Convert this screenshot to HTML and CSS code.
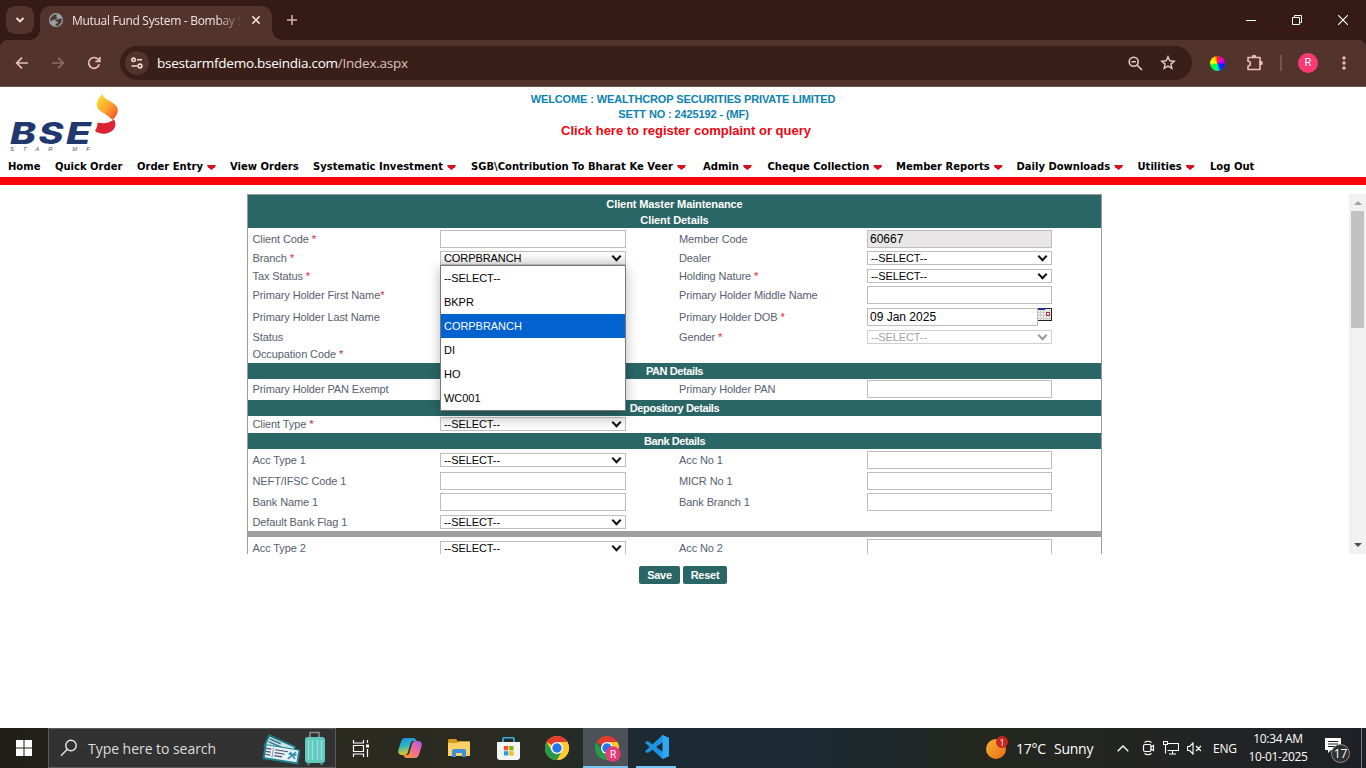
FILE: index.html
```
<!DOCTYPE html>
<html lang="en">
<head>
<meta charset="utf-8">
<title>Mutual Fund System - Bombay Stock Exchange</title>
<link rel="stylesheet" href="styles.css">
</head>
<body>
<div class="screen">
  <header class="tabstrip">
    <button class="tab-search"><svg width="28" height="28" viewBox="0 0 28 28"><path d="M10.5 12l3.5 3.5 3.5-3.5" fill="none" stroke="#f3e3df" stroke-width="1.8"/></svg></button>
    <div class="tab">
      <svg class="globe" width="14" height="14" viewBox="0 0 14 14"><circle cx="7" cy="7" r="7" fill="#94a0a8"/><path d="M4 2.2l3.8-1-.6 2.2 1.2 1.7-2.3 1.6-2.7.2L1.8 9 1.3 5.6zM8.6 6.2l4.3-.7-.6 3.8-2.7 3.2-3.1.5.2-1.9 2.4-1-1-1.6-2-.2 1-1.5z" fill="#52342d"/></svg>
      <span class="tab-title">Mutual Fund System - Bombay <i>S</i></span>
      <svg class="tab-close" width="10" height="10" viewBox="0 0 10 10"><path d="M1.4 1.4l7.2 7.2M8.6 1.4L1.4 8.6" stroke="#f3e3df" stroke-width="1.5"/></svg>
    </div>
    <svg class="newtab" width="12" height="12" viewBox="0 0 12 12"><path d="M6 1v10M1 6h10" stroke="#dcb3ab" stroke-width="1.5"/></svg>
    <div class="window-buttons">
      <svg width="10" height="10"><path d="M0 5.5h10" stroke="#fff"/></svg>
      <svg width="10" height="10" fill="none" stroke="#fff"><path d="M.5 2.5h7v7h-7zM2.500 2V.5h7v7H8"/></svg>
      <svg width="10" height="10"><path d="M0 0l10 10M10 0L0 10" stroke="#fff" stroke-width="1.1"/></svg>
    </div>
  </header>
  <div class="toolbar">
    <svg class="tb-icon back" width="14" height="14" viewBox="0 0 14 14" fill="none" stroke="#e9c0b7" stroke-width="1.7"><path d="M13 7H2M7 1.700L1.700 7 7 12.300"/></svg>
    <svg class="tb-icon fwd" width="14" height="14" viewBox="0 0 14 14" fill="none" stroke="#8d6b63" stroke-width="1.7"><path d="M1 7h11M7 1.700L12.300 7 7 12.300"/></svg>
    <svg class="tb-icon reload" width="14" height="14" viewBox="0 0 14 14" fill="none" stroke="#e9c0b7" stroke-width="1.7"><path d="M12.300 8.300A5.400 5.400 0 1 1 11.300 3.500L12.600 5M12.800 1v4.400H8.400"/></svg>
    <div class="omnibox">
      <span class="site"><svg width="14" height="12" viewBox="0 0 14 12" fill="none" stroke="#eed9d4" stroke-width="1.600"><circle cx="3.500" cy="2.800" r="1.700"/><path d="M7 2.800h5M1.500 9H7"/><circle cx="10" cy="9" r="1.900"/></svg></span>
      <span class="url">bsestarmfdemo.bseindia.com<i>/Index.aspx</i></span>
      <svg class="zoomicon" width="15" height="15" viewBox="0 0 15 15" fill="none" stroke="#e3cbc5" stroke-width="1.600"><circle cx="5.700" cy="5.700" r="4.500"/><path d="M9 9l5 5M3.500 5.700h4.400"/></svg>
      <svg class="star" width="16" height="16" viewBox="0 0 16 16" fill="none" stroke="#e3cbc5" stroke-width="1.400"><path d="M8 1.800l1.800 4 4.400.4-3.300 2.900 1 4.300L8 11.100l-3.900 2.300 1-4.300-3.300-2.900 4.400-.4z"/></svg>
    </div>
    <span class="wheel"></span>
    <svg class="puzzle" width="18" height="18" viewBox="0 0 18 18" fill="none" stroke="#e9c0b7" stroke-width="1.600" stroke-linejoin="round"><path d="M2 3.500h12v12H2v-3.500a2.400 2.400 0 0 0 0-4.800z"/><path d="M6.500 3a1.500 1.500 0 0 1 3 0zM14.500 7.500a1.500 1.500 0 0 1 0 3z" fill="#e9c0b7"/></svg>
    <span class="tb-sep"></span>
    <span class="avatar">R</span>
    <svg class="kebab" width="4" height="14" viewBox="0 0 4 14" fill="#e9c0b7"><circle cx="2" cy="2" r="1.700"/><circle cx="2" cy="7" r="1.700"/><circle cx="2" cy="12" r="1.700"/></svg>
  </div>

  <main class="page">
    <div class="masthead">
      <svg class="logo" width="124" height="68" viewBox="0 0 124 68">
        <defs><linearGradient id="flame" x1="0" y1="0" x2="1" y2="1"><stop offset="0" stop-color="#ffe43a"/><stop offset=".5" stop-color="#fba72c"/><stop offset="1" stop-color="#f4472a"/></linearGradient></defs>
        <text class="logo-name" y="56.500"><tspan x="10" textLength="26" lengthAdjust="spacingAndGlyphs">B</tspan><tspan x="38.500" textLength="25" lengthAdjust="spacingAndGlyphs">S</tspan><tspan x="66" textLength="25" lengthAdjust="spacingAndGlyphs">E</tspan></text>
        <text class="logo-sub" x="10" y="63.500" textLength="80">STAR MF</text>
        <path d="M102.500 7c-4 4-6.500 8-5.500 12.500 1.500 5.500 9 6.500 15.500 13.500 4-3.500 6-8 5-12-2.500-7-14.500-7.500-15-14z" fill="url(#flame)"/>
        <path d="M97.500 35.500c6 1.500 12 .5 16.500-3 2 3 2 7-.5 10-4 5-13 5.500-18.500 1.500 2-3 2.500-6 2.500-8.500z" fill="#dc2430"/>
      </svg>
      <div class="welcome">
        <p class="w1">WELCOME : WEALTHCROP SECURITIES PRIVATE LIMITED</p>
        <p class="w2">SETT NO : 2425192 - (MF)</p>
        <p class="w3">Click here to register complaint or query</p>
      </div>
    </div>
    <nav class="menu">
      <a style="width:47px">Home</a><a style="width:82px">Quick Order</a><a class="drop" style="width:93px">Order Entry</a><a style="width:83px">View Orders</a><a class="drop" style="width:158px">Systematic Investment</a><a class="drop" style="width:232px">SGB\Contribution To Bharat Ke Veer</a><a class="drop" style="width:64.500px">Admin</a><a class="drop" style="width:128.500px">Cheque Collection</a><a class="drop" style="width:120.500px">Member Reports</a><a class="drop" style="width:121px">Daily Downloads</a><a class="drop" style="width:72.500px">Utilities</a><a>Log Out</a>
    </nav>
    <div class="workspace">
      <form class="sheet">
        <div class="band tall"><span>Client Master Maintenance</span><span>Client Details</span></div>
        <div class="row r21 down"><label>Client Code <b>*</b></label><span class="input"></span><label>Member Code</label><span class="input readonly">60667</span></div>
        <div class="row r18 branch"><label>Branch <b>*</b></label><span class="select shaded">CORPBRANCH</span><label>Dealer</label><span class="select">--SELECT--</span>
          <ul class="options"><li>--SELECT--</li><li>BKPR</li><li class="chosen">CORPBRANCH</li><li>DI</li><li>HO</li><li>WC001</li></ul>
        </div>
        <div class="row r18"><label>Tax Status <b>*</b></label><span class="select">--SELECT--</span><label>Holding Nature <b>*</b></label><span class="select">--SELECT--</span></div>
        <div class="row r21 up"><label>Primary Holder First Name<b>*</b></label><span class="input"></span><label>Primary Holder Middle Name</label><span class="input"></span></div>
        <div class="row r22"><label>Primary Holder Last Name</label><span class="input"></span><label>Primary Holder DOB <b>*</b></label><span class="date"><span class="input">09 Jan 2025</span><svg width="14" height="13" viewBox="0 0 14 13"><path fill="#eee" d="M0 0h14v13H0z"/><path d="M2.500 2v10M5.500 2v10M8.500 2v10M11.500 2v10M0 4.500h13M0 7.500h13M0 10.500h13" stroke="#ccc"/><path fill="#1b2fa0" d="M0 0h7v2H0z"/><path fill="#222" d="M7 0h7v1H7zM13 0h1v13h-1zM0 12h14v1H0z"/><path d="M8.500 4.500h3v3h-3z" fill="#fff" stroke="#b02030"/></svg></span></div>
        <div class="row r18"><label>Status</label><span class="select">--SELECT--</span><label>Gender <b>*</b></label><span class="select disabled">--SELECT--</span></div>
        <div class="row r17"><label>Occupation Code <b class="dim">*</b></label></div>
        <div class="band tight">PAN Details</div>
        <div class="row r21 up"><label>Primary Holder PAN Exempt</label><span class="select">--SELECT--</span><label>Primary Holder PAN</label><span class="input"></span></div>
        <div class="band tight">Depository Details</div>
        <div class="row r17 up"><label>Client Type <b class="dim">*</b></label><span class="select under">--SELECT--</span></div>
        <div class="band tight">Bank Details</div>
        <div class="row r21 down"><label>Acc Type 1</label><span class="select">--SELECT--</span><label>Acc No 1</label><span class="input"></span></div>
        <div class="row r21 down"><label>NEFT/IFSC Code 1</label><span class="input"></span><label>MICR No 1</label><span class="input"></span></div>
        <div class="row r21 down"><label>Bank Name 1</label><span class="input"></span><label>Bank Branch 1</label><span class="input"></span></div>
        <div class="row r19 down"><label>Default Bank Flag 1</label><span class="select">--SELECT--</span></div>
        <div class="divider"></div>
        <div class="row r22"><label>Acc Type 2</label><span class="select">--SELECT--</span><label>Acc No 2</label><span class="input"></span></div>
      </form>
      <div class="scrollbar"><svg width="8" height="4"><path d="M0 4l4-4 4 4z" fill="#a3a3a3"/></svg><span class="thumb"></span><svg class="dn" width="8" height="4"><path d="M0 0l4 4 4-4z" fill="#505050"/></svg></div>
    </div>
    <div class="actions"><button class="save">Save</button><button class="reset">Reset</button></div>
  </main>

  <footer class="taskbar">
    <span class="start"><svg width="16" height="16" viewBox="0 0 16 16" fill="#fff"><path d="M0 0h7.500v7.500H0zM8.500 0H16v7.500H8.500zM0 8.500h7.500V16H0zM8.500 8.500H16V16H8.500z"/></svg></span>
    <div class="search">
      <svg width="18" height="18" viewBox="0 0 18 18" fill="none" stroke="#e8e8e8" stroke-width="1.400"><circle cx="11" cy="6.500" r="5.200"/><path d="M7.300 10.300L1 16.700"/></svg>
      <span>Type here to search</span>
      <svg class="travel" width="66" height="36" viewBox="0 0 66 36">
        <g transform="rotate(24 5 5)"><path d="M7 3h30v14H7z" fill="#18777f"/><path d="M9 5h27v10H9z" fill="#c9e4ea"/><path d="M10 7h12M10 10h16" stroke="#397486" stroke-width="1.500"/></g>
        <g transform="rotate(9 3 20)"><path d="M3 14h36v15H3z" fill="#1b8390"/><path d="M5 15h32v12H5z" fill="#e6f1f5"/><path d="M5 18h5M5 21h5M5 24h5M14 18h13M14 21h10M14 24h8" stroke="#4c5273" stroke-width="1.200"/><path d="M29 18l6 6M35 17l-7 8M28 20h8" stroke="#3590ae" stroke-width="1.700"/><path d="M12 16v10" stroke="#999"/></g>
        <path d="M49 8V2.500h9V8" fill="none" stroke="#8b8d91" stroke-width="1.600"/><rect x="44" y="7" width="20" height="26" rx="3" fill="#62c8bd"/><path d="M47.500 10v20M51.500 10v20M56.500 10v20M60.500 10v20" stroke="#8be3d8" stroke-width="1.500"/><path d="M46 34h3M59 34h3" stroke="#397c78" stroke-width="2"/>
      </svg>
    </div>
    <div class="apps">
      <span><svg width="18" height="17" viewBox="0 0 18 17" fill="none" stroke="#fff" stroke-width="1.200"><path d="M1.500 0v3h10V0M1.500 17v-3h10v3M1.500 5.500h10v6h-10zM15.500 0v3M15.500 9v8"/><path d="M14 4.500h3v3h-3z" fill="#fff" stroke="none"/></svg></span>
      <span><svg width="24" height="22" viewBox="0 0 24 22">
        <defs><linearGradient id="cpa" x1="0" y1="0" x2=".2" y2="1"><stop offset="0" stop-color="#2487e8"/><stop offset=".5" stop-color="#28b9bd"/><stop offset="1" stop-color="#e8c330"/></linearGradient><linearGradient id="cpb" x1="1" y1="0" x2=".3" y2="1"><stop offset="0" stop-color="#a05be8"/><stop offset=".5" stop-color="#ed6a9b"/><stop offset="1" stop-color="#f88d42"/></linearGradient></defs>
        <path d="M7 1h8c2 0 3 1 3.500 3H15c-1.500 0-2 1-2.500 2.500L10 15c-.6 2-1.600 3-3.500 3H4c-3 0-4.500-2-3.500-5.500L3 4.500C3.700 2 5 1 7 1z" fill="url(#cpa)"/>
        <path d="M17 21H9c-2 0-3-1-3.500-3H9c1.500 0 2-1 2.500-2.500L14 7c.6-2 1.600-3 3.500-3H20c3 0 4.500 2 3.500 5.500L21 17.500C20.300 20 19 21 17 21z" fill="url(#cpb)"/></svg></span>
      <span><svg width="22" height="18" viewBox="0 0 22 18"><path d="M0 1.500Q0 0 1.500 0H8l2 2.500h11V5H0z" fill="#db9a16"/><path d="M0 4h9l2-1.500h11V17H0z" fill="#fbd168"/><path d="M4 18v-6q0-2 2-2h10q2 0 2 2v6h-4v-4H8v4z" fill="#3b91d5"/></svg></span>
      <span><svg width="23" height="23" viewBox="0 0 23 23"><path d="M6 6V2q0-1.300 1.300-1.300h8.400Q17 .7 17 2v4" fill="none" stroke="#31b1e8" stroke-width="1.700"/><path d="M0 5h23v15q0 3-3 3H3q-3 0-3-3z" fill="#f4f4f4"/><path d="M7 9h4.300v4.300H7z" fill="#f05022"/><path d="M12.200 9h4.300v4.300h-4.300z" fill="#7db700"/><path d="M7 14.200h4.300v4.300H7z" fill="#1aa1e8"/><path d="M12.200 14.200h4.300v4.300h-4.300z" fill="#fdb80a"/></svg></span>
      <span><svg width="24" height="24" viewBox="0 0 24 24"><circle cx="12" cy="12" r="12" fill="#fcc934"/><path d="M12 12L1.600 6A12 12 0 0 1 22.400 6H12z" fill="#e33b2e"/><path d="M1.600 6A12 12 0 0 0 12 24l5.200-9H6.800z" fill="#249a4a"/><path d="M12 6h10.400A12 12 0 0 1 12 24l5.200-9z" fill="#fcc934"/><circle cx="12" cy="12" r="6" fill="#fff"/><circle cx="12" cy="12" r="4.700" fill="#2776e8"/></svg></span>
      <span class="active"><svg width="27" height="26" viewBox="0 0 27 26"><path d="M12 12L1.600 6A12 12 0 0 1 22.400 6H12z" fill="#e33b2e"/><path d="M1.600 6A12 12 0 0 0 12 24l5.200-9H6.800z" fill="#249a4a"/><path d="M12 6h10.400A12 12 0 0 1 12 24l5.200-9z" fill="#fcc934"/><circle cx="12" cy="12" r="6" fill="#fff"/><circle cx="12" cy="12" r="4.700" fill="#2776e8"/><circle cx="18" cy="18" r="7.700" fill="#e83b76"/><text class="badge-letter" x="18" y="21.500">R</text></svg></span>
      <span class="running"><svg width="24" height="24" viewBox="0 0 24 24"><path d="M17.500 0L24 3v18l-6.500 3L2 9.500 0 8l1.500-1.700 2 .2L18 17V7L3.500 17.500l-2 .2L0 16l2-1.500z" fill="#1c94e0"/><path d="M17.500 0L24 3v18l-6.500 3z" fill="#32a8f0"/></svg></span>
    </div>
    <div class="weather"><svg width="23" height="24" viewBox="0 0 23 24"><defs><linearGradient id="sun" x1="0" y1="0" x2="1" y2="1"><stop offset="0" stop-color="#f6b234"/><stop offset="1" stop-color="#ec6c10"/></linearGradient></defs><circle cx="10" cy="13" r="10" fill="url(#sun)"/><circle cx="16" cy="6" r="6" fill="#c9261d"/><text class="alert" x="16" y="9.500">1</text></svg><span class="temp">17°C</span><span class="sky">Sunny</span></div>
    <div class="tray">
      <svg class="t1" width="12" height="7" viewBox="0 0 12 7"><path d="M.7 6.300L6 1l5.300 5.300" fill="none" stroke="#fff" stroke-width="1.300"/></svg>
      <svg class="t2" width="13" height="16" viewBox="0 0 13 16" fill="none" stroke="#fff" stroke-width="1.200"><path d="M2.500 2.500Q6 0 9.500 2.500M2.500 13.500Q6 16 9.500 13.500M8.500 7l3-1.500v5L8.500 9"/><rect x="1.500" y="4.500" width="7.500" height="7" rx="1.500"/></svg>
      <svg class="t3" width="16" height="14" viewBox="0 0 16 14" fill="none" stroke="#fff" stroke-width="1.100"><path d="M4.500 2.500h11v7H4.500M.5.500h4v3h-4zM2.500 3.500v9M9.500 9.500v3M6 13h7"/></svg>
      <svg class="t4" width="15" height="13" viewBox="0 0 15 13" fill="none" stroke="#fff" stroke-width="1.100"><path d="M.6 4.500h2L6 1v11L2.600 8.500h-2zM9 4l5 5M14 4L9 9"/></svg>
      <span class="lang">ENG</span>
      <span class="clock"><span>10:34 AM</span><span class="day">10-01-2025</span></span>
      <svg class="note" width="26" height="26" viewBox="0 0 26 26"><path d="M0 0h16v12H6l-3 3v-3H0z" fill="#fff"/><path d="M3 3.500h10M3 6h10M3 8.500h10" stroke="#252525"/><circle cx="15.500" cy="15.500" r="9" fill="#303030" stroke="#8e8e8e"/><text class="count" x="15.500" y="19.700">17</text></svg>
    </div>
  </footer>
</div>
</body>
</html>
```
FILE: styles.css
```
*, *::before, *::after { box-sizing: border-box; }
body { margin: 0; background: #fff; font-family: "Liberation Sans", Arial, sans-serif; }
svg { display: block; flex: none; }
p, ul { margin: 0; padding: 0; list-style: none; }
button { border: 0; padding: 0; }
i { font-style: normal; }
.screen { width: 1366px; height: 768px; display: flex; flex-direction: column; overflow: hidden; }

/* Browser frame */
.tabstrip { height: 40px; flex: none; display: flex; align-items: center; background: #351a15; padding-left: 6px; font-family: "Open Sans", "Noto Sans", sans-serif; }
.tab-search { width: 28px; height: 28px; border-radius: 9px; background: #52342d; }
.tab { position: relative; width: 232px; height: 34px; margin: 6px 0 0 6px; padding: 0 11px 6px 9px; display: flex; align-items: center; background: #52342d; border-radius: 10px 10px 0 0; }
.tab::before, .tab::after { content: ""; position: absolute; bottom: 0; width: 10px; height: 10px; }
.tab::before { left: -10px; background: radial-gradient(circle at 0 0, transparent 9.500px, #52342d 10px); }
.tab::after { right: -10px; background: radial-gradient(circle at 100% 0, transparent 9.500px, #52342d 10px); }
.tab-title { margin-left: 9px; width: 174px; white-space: nowrap; font-size: 12px; letter-spacing: -.3px; color: #f3e3df; -webkit-mask-image: linear-gradient(90deg, #000 145px, transparent 170px); mask-image: linear-gradient(90deg, #000 145px, transparent 170px); }
.tab-close { margin-left: auto; }
.newtab { margin-left: 14px; }
.window-buttons { margin-left: auto; display: flex; gap: 36px; padding-right: 18px; }
.toolbar { height: 47px; flex: none; display: flex; align-items: center; background: radial-gradient(circle at 8px 8px, #52342d 8px, #351a15 8.500px) 0 0 / 8px 8px no-repeat, radial-gradient(circle at 0 8px, #52342d 8px, #351a15 8.500px) 100% 0 / 8px 8px no-repeat, #52342d; border-bottom: 1px solid #705850; padding-left: 15px; }
.fwd { margin-left: 22px; }
.reload { margin-left: 22px; }
.omnibox { width: 1072px; height: 34px; margin-left: 19px; border-radius: 17px; background: #3a1f18; display: flex; align-items: center; padding-left: 5px; }
.site { width: 24px; height: 24px; border-radius: 12px; background: #52342d; display: flex; align-items: center; justify-content: center; }
.url { margin-left: 8px; font: 13.500px "Open Sans", "Noto Sans", sans-serif; letter-spacing: -.25px; color: #fff; white-space: nowrap; }
.url i { color: #d9c4bf; }
.zoomicon { margin-left: auto; }
.star { margin: 0 16px 0 17px; }
.wheel { width: 15px; height: 15px; border-radius: 50%; margin-left: 18px; background: conic-gradient(#ff2020, #f0c 40deg, #a0f 85deg, #02f 100deg, #03f 150deg, #0cc 170deg, #0f6 200deg, #0f3 250deg, #ff0 280deg, #fd0 330deg, #f22); }
.puzzle { margin-left: 21px; }
.tb-sep { width: 2px; height: 16px; background: #75544b; margin-left: 16px; }
.avatar { width: 20px; height: 20px; border-radius: 50%; margin-left: 16px; background: #f83a72; color: #fff; font: 11px/20px Roboto, sans-serif; text-align: center; }
.kebab { margin-left: 24px; }

/* Page head */
.page { flex: 1; display: flex; flex-direction: column; min-height: 0; }
.masthead { height: 70px; display: flex; }
.logo-name { font: italic 800 30px Inter, "Liberation Sans", sans-serif; fill: #21386f; }
.logo-sub { font: italic 6px "Liberation Sans", sans-serif; fill: #555; }
.welcome { width: 1118px; text-align: center; font-weight: bold; font-size: 11px; letter-spacing: -.12px; color: #0c82ae; padding-top: 5px; white-space: nowrap; }
.welcome p { line-height: 15px; }
.w2 { padding-left: 1px; }
.welcome .w3 { font-size: 13px; letter-spacing: 0; color: #f00510; line-height: 17px; padding-left: 6px; }
.menu { height: 28px; flex: none; display: flex; padding: 3px 0 0 8px; border-bottom: 8px solid #ff0008; font: bold 10px/13px "DejaVu Sans", Verdana, sans-serif; color: #000; white-space: nowrap; }
.menu a { flex: none; }
.drop::after { content: ""; display: inline-block; width: 9px; height: 5px; margin-left: 4px; vertical-align: 0; background: #d6101c; clip-path: polygon(0 0, 100% 0, 88% 45%, 50% 100%, 12% 45%); }

/* Form */
.workspace { height: 360px; margin-top: 9px; flex: none; display: flex; justify-content: space-between; padding-left: 247px; }
.sheet { width: 855px; height: 360px; overflow: hidden; border: 1px solid #9c9c9c; border-bottom: 0; font-size: 11px; color: #56606f; }
.band { height: 16px; line-height: 16px; background: #2b6666; color: #fff; font-weight: bold; text-align: center; letter-spacing: -.1px; }
.band.tight { letter-spacing: -.4px; }
.band.tall { height: 33px; padding-top: 1px; }
.band span { display: block; }
.row { display: grid; grid-template-columns: 187.500px 186px 53px 188px 185px; align-items: center; padding-left: 4.500px; white-space: nowrap; line-height: 13px; }
.row label { letter-spacing: -.1px; }
.row label:first-child { grid-column: 1; }
.row label:nth-of-type(2) { grid-column: 4; }
.r17 { height: 17px; } .r18 { height: 18px; } .r19 { height: 19px; } .r21 { height: 21px; } .r22 { height: 22px; }
.up { padding-bottom: 1px; }
.down { padding-top: 1px; }
.row b { color: #f01830; font-weight: normal; }
.row b.dim { color: #a03038; }
.input { display: block; height: 18px; border: 1px solid #bdbdbd; background: #fff; color: #000; font-size: 12px; line-height: 16px; padding-left: 2px; }
.readonly { background: #e8e6e7; }
.select { height: 14px; border: 1px solid #bdbdbd; color: #000; line-height: 12px; padding: 0 5px 0 3px; display: flex; justify-content: space-between; align-items: center; font-size: 11px; letter-spacing: -.08px; }
.select::after { content: ""; width: 7px; height: 7px; border: solid #111; border-width: 0 2px 2px 0; transform: translateY(-2px) rotate(45deg); }
.shaded { background: linear-gradient(#fff, #e8e8e8); }
.under { background: linear-gradient(#ececec, #fff); }
.disabled { color: #a2a2a2; border-color: #d0d0d0; }
.disabled::after { border-color: #999; }
.date { display: flex; }
.date .input { width: 172px; }
.divider { height: 6px; background: #9f9f9f; }
.branch { position: relative; }
.options { position: absolute; z-index: 2; left: 192px; top: 16px; width: 186px; height: 146px; background: #fff; border: 1px solid #777; color: #000; font-size: 11px; letter-spacing: -.04px; box-shadow: 0 3px 12px rgba(0, 0, 0, .28); }
.options li { height: 24px; line-height: 24px; padding-left: 3px; }
.options .chosen { background: #0262cf; color: #fff; }
.scrollbar { width: 17px; background: #f1f1f1; display: flex; flex-direction: column; align-items: center; padding: 7px 0; }
.thumb { width: 13px; height: 117px; margin-top: 6px; background: #c1c1c1; }
.dn { margin-top: auto; }
.actions { display: flex; gap: 3px; margin: 12px 0 0 639px; }
.actions button { height: 18px; border-radius: 2px; background: #2b6666; color: #fff; font: bold 11px "Liberation Sans", sans-serif; letter-spacing: -.25px; }
.save { width: 41px; }
.reset { width: 44px; }

/* Desktop bar */
.taskbar { height: 40px; flex: none; display: flex; align-items: stretch; color: #fff; font-family: "Open Sans", "Noto Sans", sans-serif; background: linear-gradient(90deg, #211f18, #2b2a20 350px, #2a2b23 540px, #1c2a33 650px, #1b2a35 800px, #24271f 980px, #232424 1180px, #1d2125); }
.start { width: 48px; display: flex; align-items: center; justify-content: center; }
.search { width: 288px; border: 1px solid #5b5b5b; background: #323232; display: flex; align-items: center; padding-left: 11px; font-size: 14px; letter-spacing: -.04px; color: #ddd; white-space: nowrap; }
.search span { margin-left: 10px; }
.travel { margin-left: auto; margin-right: 8px; }
.apps { display: flex; }
.apps span { width: 49px; display: flex; align-items: center; justify-content: center; padding-left: 1px; }
.apps .active { width: 45px; margin-left: 2px; background: #4d5257; border-bottom: 2px solid #76c5f2; padding: 3px 0 0 5px; }
.apps .running { width: 40px; margin-left: 8px; border-bottom: 2px solid #76c5f2; }
.badge-letter { font: 10px Roboto, sans-serif; fill: #fff; text-anchor: middle; }
.weather { display: flex; align-items: center; width: 110px; margin-left: 310px; font-size: 14px; letter-spacing: -.25px; white-space: nowrap; }
.temp { margin-left: 7px; width: 31px; }
.sky { margin-left: 7px; }
.alert { font: 9px "Open Sans", sans-serif; fill: #fff; text-anchor: middle; }
.tray { display: flex; align-items: center; margin: 0 4px 0 auto; padding-left: 4px; width: 249px; font-size: 12px; border-right: 1px solid #777; flex: none; }
.t2 { margin-left: 13px; }
.t3 { margin-left: 8px; }
.t4 { margin-left: 8px; }
.lang { margin-left: 11px; width: 24px; letter-spacing: -.2px; }
.clock { margin-left: 9px; width: 64px; line-height: 18px; letter-spacing: -.35px; white-space: nowrap; display: flex; flex-direction: column; align-items: center; }
.note { margin: 6px 0 0 15px; }
.count { font: 12px "Open Sans", sans-serif; fill: #fff; text-anchor: middle; }
```
